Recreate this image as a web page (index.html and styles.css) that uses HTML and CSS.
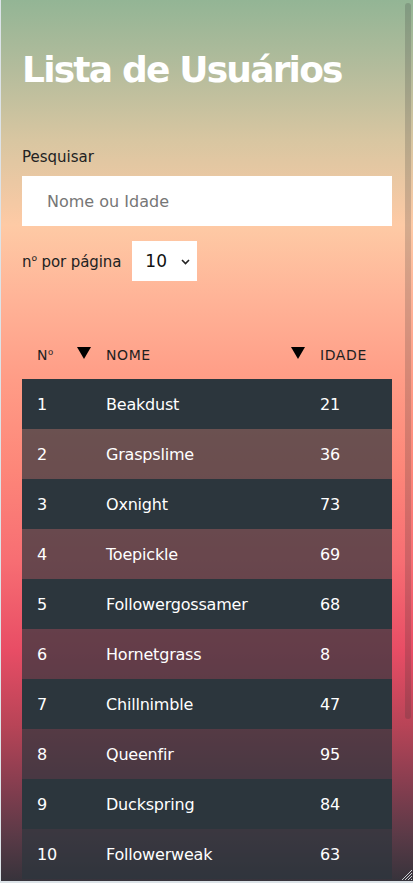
FILE: index.html
```html
<!DOCTYPE html>
<html lang="pt-BR">
<head>
<meta charset="utf-8">
<title>Lista de Usuários</title>
<link rel="stylesheet" href="styles.css">
</head>
<body>
<div class="frame">
  <main class="page">
    <h1 class="title">Lista de Usuários</h1>
    <label class="label" for="busca">Pesquisar</label>
    <input class="search" id="busca" type="text" placeholder="Nome ou Idade">
    <div class="per-page">
      <span class="per-page-label">n<span class="ord">º</span> por página</span>
      <div class="select-wrap">
        <select class="select">
          <option>10</option>
          <option>20</option>
          <option>50</option>
        </select>
        <svg class="chev" width="9" height="6" viewBox="0 0 9 6"><path d="M1 1 L4.5 4.5 L8 1" fill="none" stroke="#222" stroke-width="1.6"/></svg>
      </div>
    </div>
    <table class="users">
      <thead>
        <tr>
          <th class="c1"><div class="th-in"><span>N<span class="ord">º</span></span><svg class="tri" width="14" height="12" viewBox="0 0 14 12"><polygon points="0,0 14,0 7,12" fill="#000"/></svg></div></th>
          <th class="c2"><div class="th-in"><span>Nome</span><svg class="tri" width="14" height="12" viewBox="0 0 14 12"><polygon points="0,0 14,0 7,12" fill="#000"/></svg></div></th>
          <th class="c3"><div class="th-in"><span>Idade</span></div></th>
        </tr>
      </thead>
      <tbody>
        <tr><td>1</td><td>Beakdust</td><td>21</td></tr>
        <tr><td>2</td><td>Graspslime</td><td>36</td></tr>
        <tr><td>3</td><td>Oxnight</td><td>73</td></tr>
        <tr><td>4</td><td>Toepickle</td><td>69</td></tr>
        <tr><td>5</td><td>Followergossamer</td><td>68</td></tr>
        <tr><td>6</td><td>Hornetgrass</td><td>8</td></tr>
        <tr><td>7</td><td>Chillnimble</td><td>47</td></tr>
        <tr><td>8</td><td>Queenfir</td><td>95</td></tr>
        <tr><td>9</td><td>Duckspring</td><td>84</td></tr>
        <tr><td>10</td><td>Followerweak</td><td>63</td></tr>
      </tbody>
    </table>
  </main>
  <div class="scroll-thumb"></div>
  <svg class="grip" width="14" height="14" viewBox="0 0 14 14">
    <path d="M13 3 L3 13 M13 6 L6 13 M13 9 L9 13 M13 12 L12 13" stroke="#c9cdd2" stroke-width="1" fill="none"/>
  </svg>
</div>
</body>
</html>
```
FILE: styles.css
```css
html, body {
  margin: 0;
  padding: 0;
}
body {
  background: #dce3e8;
  padding-left: 1px;
  height: 883px;
  overflow: hidden;
  font-family: "DejaVu Sans", "Liberation Sans", sans-serif;
}
.frame {
  position: relative;
  width: 412px;
  height: 881px;
  overflow: hidden;
  background: #3a3540;
}
.page {
  box-sizing: border-box;
  min-height: 1084px;
  padding: 48px 20px 205px 21px;
  background: linear-gradient(to bottom,
    #93b595 0px,
    #b4bc9c 70px,
    #d8c6a1 140px,
    #fecaa5 225px,
    #ffb397 300px,
    #ff9c86 380px,
    #fd8679 470px,
    #f76e73 560px,
    #e84d65 650px,
    #b84457 725px,
    #8a3e50 780px,
    #5b3a47 835px,
    #36333b 882px,
    #2f3239 1084px);
}
.scroll-thumb {
  position: absolute;
  top: 3px;
  right: 2px;
  width: 6px;
  height: 716px;
  border-radius: 3px;
  background: rgba(50, 50, 50, 0.2);
}
.grip {
  position: absolute;
  right: 0;
  bottom: 0;
}
.title {
  margin: 0;
  font-size: 36px;
  line-height: 44px;
  font-weight: 700;
  color: #fff;
  letter-spacing: -1.8px;
}
.label {
  display: block;
  margin-top: 55px;
  font-size: 15px;
  line-height: 20px;
  color: #222;
}
.search {
  display: block;
  box-sizing: border-box;
  width: 370px;
  height: 50px;
  margin-top: 9px;
  padding: 0 25px;
  border: none;
  outline: none;
  background: #fff;
  font-family: inherit;
  font-size: 16px;
  color: #222;
}
.search::placeholder {
  color: #767676;
}
.per-page {
  display: flex;
  align-items: center;
  gap: 11px;
  margin-top: 15px;
}
.per-page-label {
  font-size: 15px;
  color: #222;
  letter-spacing: -0.1px;
}
.ord {
  font-family: "Open Sans", "DejaVu Sans", sans-serif;
}
.select-wrap {
  position: relative;
  width: 65px;
  height: 40px;
}
.select {
  appearance: none;
  -webkit-appearance: none;
  box-sizing: border-box;
  width: 100%;
  height: 100%;
  padding: 0 0 0 13px;
  border: none;
  border-radius: 0;
  outline: none;
  background: #fff;
  font-family: inherit;
  font-size: 17px;
  color: #111;
}
.chev {
  position: absolute;
  right: 7px;
  top: 18px;
  pointer-events: none;
}
.users {
  width: 370px;
  margin-top: 49px;
  border-collapse: collapse;
  table-layout: fixed;
}
.c1 { width: 69px; }
.c2 { width: 214px; }
.c3 { width: 87px; }
.users th {
  height: 49px;
  padding: 0;
  text-align: left;
  font-weight: 400;
  font-size: 14px;
  letter-spacing: 0.6px;
  text-transform: uppercase;
  color: #1e1e1e;
}
.th-in {
  display: flex;
  align-items: center;
  justify-content: space-between;
  padding-left: 15px;
}
.tri {
  display: block;
  margin-top: -3px;
}
.users td {
  height: 50px;
  padding: 0 0 0 15px;
  font-size: 16px;
  color: #fff;
  letter-spacing: -0.2px;
  white-space: nowrap;
}
.users tbody tr:nth-child(odd) {
  background: #2c363d;
}
.users tbody tr:nth-child(even) {
  background: rgba(44, 54, 61, 0.7);
}
```
